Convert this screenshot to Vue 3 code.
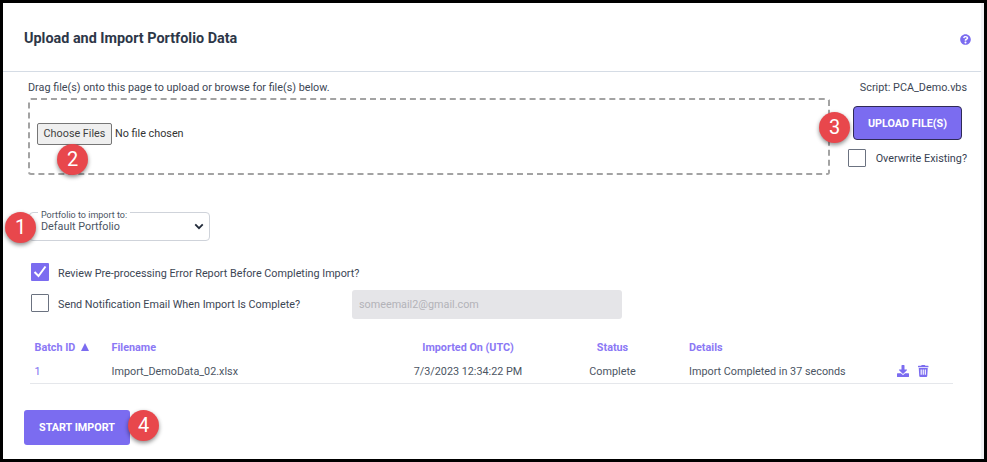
<script setup>
const row = {
  id: '1',
  file: 'Import_DemoData_02.xlsx',
  date: '7/3/2023 12:34:22 PM',
  status: 'Complete',
  details: 'Import Completed in 37 seconds'
}
</script>

<template>
  <div class="shot">
    <div class="page">
      <header class="head">
        <h1>Upload and Import Portfolio Data</h1>
        <svg class="help" viewBox="0 0 512 512" width="11" height="11">
          <path fill="#7b6cf0" d="M504 256c0 137-111 248-248 248S8 393 8 256 119 8 256 8s248 111 248 248zM263 90c-54 0-89 23-116 63-4 5-3 12 3 16l35 26c5 4 13 3 17-2 18-23 30-36 58-36 21 0 46 13 46 33 0 15-12 23-33 34-23 14-55 31-55 73v6c0 7 5 12 12 12h56c7 0 12-5 12-12v-3c0-30 86-31 86-110 0-60-62-100-121-100zm-7 254c-26 0-47 21-47 47s21 47 47 47 47-21 47-47-21-47-47-47z"/>
        </svg>
      </header>

      <section class="upload">
        <div class="upload-left">
          <p class="hint">Drag file(s) onto this page to upload or browse for file(s) below.</p>
          <div class="drop">
            <span class="file-btn">Choose Files</span>
            <span class="file-none">No file chosen</span>
            <span class="badge b2">2</span>
          </div>
        </div>
        <div class="upload-right">
          <p class="script">Script: PCA_Demo.vbs</p>
          <button class="up-btn">UPLOAD FILE(S)<span class="badge b3">3</span></button>
          <label class="over"><span class="box"></span><span>Overwrite Existing?</span></label>
        </div>
      </section>

      <div class="select-wrap">
        <div class="select">
          <span class="legend">Portfolio to import to:</span>
          <span class="value">Default Portfolio</span>
          <svg class="chev" viewBox="0 0 12 8" width="10" height="7">
            <path d="M1.5 1.5 6 6l4.500-4.500" fill="none" stroke="#222b3a" stroke-width="2.200"/>
          </svg>
        </div>
        <span class="badge b1">1</span>
      </div>

      <div class="checks">
        <label class="check">
          <span class="box on">
            <svg viewBox="0 0 18 18" width="18" height="18">
              <path d="M3.500 9 7.500 13 14.500 3.500" fill="none" stroke="#fff" stroke-width="2"/>
            </svg>
          </span>
          <span class="lbl">Review Pre-processing Error Report Before Completing Import?</span>
        </label>
        <div class="check second">
          <span class="box"></span>
          <span class="lbl">Send Notification Email When Import Is Complete?</span>
          <span class="email">someemail2@gmail.com</span>
        </div>
      </div>

      <div class="table">
        <div class="tr th">
          <span class="c-id">Batch ID <i class="tri"></i></span>
          <span class="c-file">Filename</span>
          <span class="c-date">Imported On (UTC)</span>
          <span class="c-status">Status</span>
          <span class="c-det">Details</span>
          <span class="c-act"></span>
        </div>
        <div class="tr td">
          <span class="c-id link">{{ row.id }}</span>
          <span class="c-file">{{ row.file }}</span>
          <span class="c-date">{{ row.date }}</span>
          <span class="c-status">{{ row.status }}</span>
          <span class="c-det">{{ row.details }}</span>
          <span class="c-act">
            <svg viewBox="0 0 512 512" width="12" height="12">
              <path fill="#7b6cf0" d="M216 0h80c13 0 24 11 24 24v168h88c18 0 27 21 14 34L270 378c-8 8-20 8-28 0L90 226c-13-13-4-34 14-34h88V24c0-13 11-24 24-24zm296 376v112c0 13-11 24-24 24H24c-13 0-24-11-24-24V376c0-13 11-24 24-24h147l49 49c20 20 52 20 72 0l49-49h147c13 0 24 11 24 24z"/>
            </svg>
            <svg viewBox="0 0 448 512" width="10.500" height="12">
              <path fill="#7b6cf0" d="M432 32H312l-9-19A24 24 0 0 0 281 0H167a24 24 0 0 0-22 13l-9 19H16A16 16 0 0 0 0 48v32a16 16 0 0 0 16 16h416a16 16 0 0 0 16-16V48a16 16 0 0 0-16-16zM53 467a48 48 0 0 0 48 45h246a48 48 0 0 0 48-45l21-339H32zm283-275v224h-48V192zm-88 0v224h-48V192zm-88 0v224h-48V192z"/>
            </svg>
          </span>
        </div>
      </div>

      <div class="start-row">
        <button class="start">START IMPORT<span class="badge b4">4</span></button>
      </div>
    </div>
  </div>
</template>

<style>
html, body { margin: 0; padding: 0; background: #000; }
</style>

<style scoped>
.shot {
  width: 987px;
  height: 462px;
  box-sizing: border-box;
  padding: 3px;
  background: #000;
  font-family: Roboto, "Liberation Sans", sans-serif;
  font-size: 10.800px;
  color: #374151;
  overflow: hidden;
}
.page {
  height: 456px;
  background: #fff;
  box-sizing: border-box;
  border-right: 3px solid #f2f2f5;
}
.head {
  height: 69px;
  box-sizing: border-box;
  border-bottom: 1px solid #d5dce5;
  display: flex;
  align-items: center;
  justify-content: space-between;
  padding: 2px 10px 0 21px;
}
.head h1 {
  margin: 0;
  font-size: 14.400px;
  font-weight: 700;
  color: #2d3748;
}
.help { margin-top: 2px; }
p { margin: 0; }
.upload {
  display: flex;
  justify-content: space-between;
}
.upload-left { padding-left: 25px; }
.hint { line-height: 13px; margin-top: 9px; color: #3c4654; }
.drop {
  position: relative;
  width: 802px;
  height: 77px;
  margin-top: 4px;
  box-sizing: border-box;
  border: 2px dashed #a3a3a3;
  border-radius: 3px;
  display: flex;
  align-items: center;
  gap: 4px;
  padding: 0 0 5px 7px;
}
.file-btn {
  width: 75px;
  height: 22px;
  box-sizing: border-box;
  border: 1px solid #767676;
  border-radius: 2px;
  background: #efefef;
  color: #3f3f3f;
  display: flex;
  align-items: center;
  justify-content: center;
  padding-bottom: 2px;
}
.file-none { color: #333; margin-bottom: 2px; margin-left: -1px; }
.upload-right {
  width: 134px;
  box-sizing: border-box;
  padding-right: 14px;
  display: flex;
  flex-direction: column;
  align-items: flex-end;
}
.script { line-height: 13px; margin-top: 9px; color: #3c4654; }
.up-btn {
  position: relative;
  width: 109px;
  height: 34px;
  margin-top: 12px;
  margin-right: 5px;
  background: #7b6cf0;
  border: 1px solid #2f2a55;
  border-radius: 4px;
  color: #fff;
  font: 700 10.800px Roboto, sans-serif;
  padding: 0;
}
.over {
  display: flex;
  align-items: center;
  gap: 10px;
  margin-top: 9px;
  align-self: flex-end;
  white-space: nowrap;
}
.box {
  width: 18px;
  height: 18px;
  box-sizing: border-box;
  border: 1px solid #6b7280;
  border-radius: 1px;
  display: block;
  flex: none;
  background: #fff;
}
.box.on { background: #7b6cf0; border: 0; }
.box.on svg { display: block; }
.select-wrap {
  position: relative;
  margin: 37px 0 0 26px;
  width: 185px;
}
.select {
  position: relative;
  width: 181px;
  height: 29px;
  box-sizing: border-box;
  border: 1px solid #cfd3da;
  border-radius: 4px;
  display: flex;
  align-items: center;
  padding: 0 0 0 11px;
}
.legend {
  position: absolute;
  top: -3px;
  left: 8px;
  background: #fff;
  padding: 0 3px;
  font-size: 9px;
  line-height: 10px;
  color: #4b5563;
}
.value { color: #4b5563; margin-top: -1px; }
.chev { position: absolute; right: 5px; top: 10px; }
.checks { padding-left: 28px; margin-top: 21px; }
.check { display: flex; align-items: center; gap: 9px; height: 20px; color: #3c4654; }
.lbl { margin-top: 2px; }
.check.second { margin-top: 11px; position: relative; }
.email {
  position: absolute;
  left: 321px;
  top: -3px;
  width: 270px;
  height: 29px;
  box-sizing: border-box;
  padding-left: 7px;
  background: #e5e5e8;
  border-radius: 3px;
  color: #b3b3b8;
  display: flex;
  align-items: center;
}
.table { margin: 23px 28px 0 27px; }
.tr { display: flex; align-items: center; }
.th { height: 23px; color: #8b78f5; font-weight: 700; }
.td { height: 24px; border-bottom: 1px solid #e5e7eb; color: #4b5563; }
.c-id { width: 81.500px; padding-left: 4.500px; box-sizing: border-box; }
.link { color: #7b6cf0; }
.c-file { width: 256.500px; }
.c-date { width: 200px; text-align: center; }
.c-status { width: 89px; text-align: center; }
.c-det { width: 240px; padding-left: 32px; box-sizing: border-box; }
.c-act { display: flex; gap: 9px; }
.tri {
  display: inline-block;
  width: 0;
  height: 0;
  margin-left: 3px;
  border-left: 4.500px solid transparent;
  border-right: 4.500px solid transparent;
  border-bottom: 8px solid #7b6cf0;
}
.start-row { margin: 26px 0 0 21px; }
.start {
  position: relative;
  width: 106px;
  height: 35px;
  background: #7b6cf0;
  border: 0;
  border-radius: 3px;
  color: #fff;
  font: 700 10.800px Roboto, sans-serif;
  padding: 0;
}
.badge {
  position: absolute;
  width: 31px;
  height: 31px;
  border-radius: 50%;
  background: #e8474c;
  color: #fff;
  font: 400 20px/31px Roboto, sans-serif;
  text-align: center;
  box-shadow: 0 2px 4px rgba(0, 0, 0, 0.450);
}
.b1 { left: -24px; top: 0; }
.b2 { left: 27px; top: 44px; }
.b3 { left: -35px; top: 5px; }
.b4 { left: 104px; top: 0; }
</style>
